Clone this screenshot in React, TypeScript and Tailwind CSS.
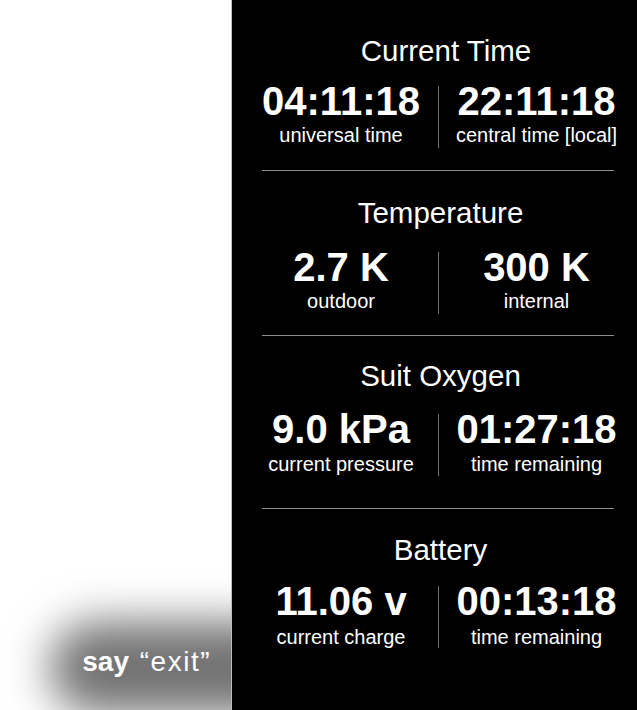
const font = { fontFamily: '"Liberation Sans", Arial, sans-serif' };

type Reading = { value: string; label: string };

type Section = {
  title: string;
  left: Reading;
  right: Reading;
  /* spacing measured off the screen, per block */
  pad: string;
  titleCls: string;
  rowGap: string;
  labelGap: string;
  rule?: string;
};

const sections: Section[] = [
  {
    title: 'Current Time',
    left: { value: '04:11:18', label: 'universal time' },
    right: { value: '22:11:18', label: 'central time [local]' },
    pad: 'pt-[36px]',
    titleCls: 'pl-[11px]',
    rowGap: 'mt-[16px]',
    labelGap: 'mt-[4px]',
    rule: 'mt-[22px]',
  },
  {
    title: 'Temperature',
    left: { value: '2.7 K', label: 'outdoor' },
    right: { value: '300 K', label: 'internal' },
    pad: 'pt-[27px]',
    titleCls: '',
    rowGap: 'mt-[20px]',
    labelGap: 'mt-[4px]',
    rule: 'mt-[21px]',
  },
  {
    title: 'Suit Oxygen',
    left: { value: '9.0 kPa', label: 'current pressure' },
    right: { value: '01:27:18', label: 'time remaining' },
    pad: 'pt-[25px]',
    titleCls: '',
    rowGap: 'mt-[19px]',
    labelGap: 'mt-[5px]',
    rule: 'mt-[32px]',
  },
  {
    title: 'Battery',
    left: { value: '11.06 v', label: 'current charge' },
    right: { value: '00:13:18', label: 'time remaining' },
    pad: 'pt-[26px]',
    titleCls: '',
    rowGap: 'mt-[17px]',
    labelGap: 'mt-[6px]',
  },
];

function ReadingCell({ reading, width, gap }: { reading: Reading; width: string; gap: string }) {
  return (
    <div className={`flex flex-col items-center ${width}`}>
      <span className="text-[40px] font-bold leading-[40px] whitespace-nowrap">{reading.value}</span>
      <span className={`text-[20px] leading-[20px] whitespace-nowrap ${gap}`}>{reading.label}</span>
    </div>
  );
}

function StatusBlock({ s }: { s: Section }) {
  return (
    <div className={s.pad}>
      <h2 className={`text-center text-[29.5px] font-normal leading-[29px] ${s.titleCls}`}>{s.title}</h2>
      <div className={`flex ${s.rowGap}`}>
        <ReadingCell reading={s.left} width="w-[194px]" gap={s.labelGap} />
        <div className="mt-[5px] h-[62px] w-px bg-[#707070]" />
        <ReadingCell reading={s.right} width="w-[195px]" gap={s.labelGap} />
      </div>
      {s.rule && <div className={`ml-[18px] h-px w-[352px] bg-[#8c8c8c] ${s.rule}`} />}
    </div>
  );
}

export default function App() {
  return (
    <div className="flex h-[710px] w-[637px] overflow-hidden" style={font}>
      {/* -------------- voice hint side ------------------------ */}
      <div className="relative flex w-[231px] flex-col items-end justify-end overflow-hidden bg-white pb-[34px] pr-[20px]">
        <div className="absolute left-[50px] top-[622px] h-[92px] w-[250px] rounded-[60px] bg-[#727272] blur-[22px]" />
        <span className="relative text-[28px] leading-none text-white whitespace-nowrap">
          <b className="font-bold">say</b>{' '}
          <span className="ml-[3px] tracking-[1.5px]">“exit”</span>
        </span>
      </div>
      <div className="w-px bg-[#bdbdbd]" />

      {/* -------------- readings panel ------------------------- */}
      <div className="w-[405px] bg-black pl-[12px] text-white">
        {sections.map((s) => (
          <StatusBlock key={s.title} s={s} />
        ))}
      </div>
    </div>
  );
}
